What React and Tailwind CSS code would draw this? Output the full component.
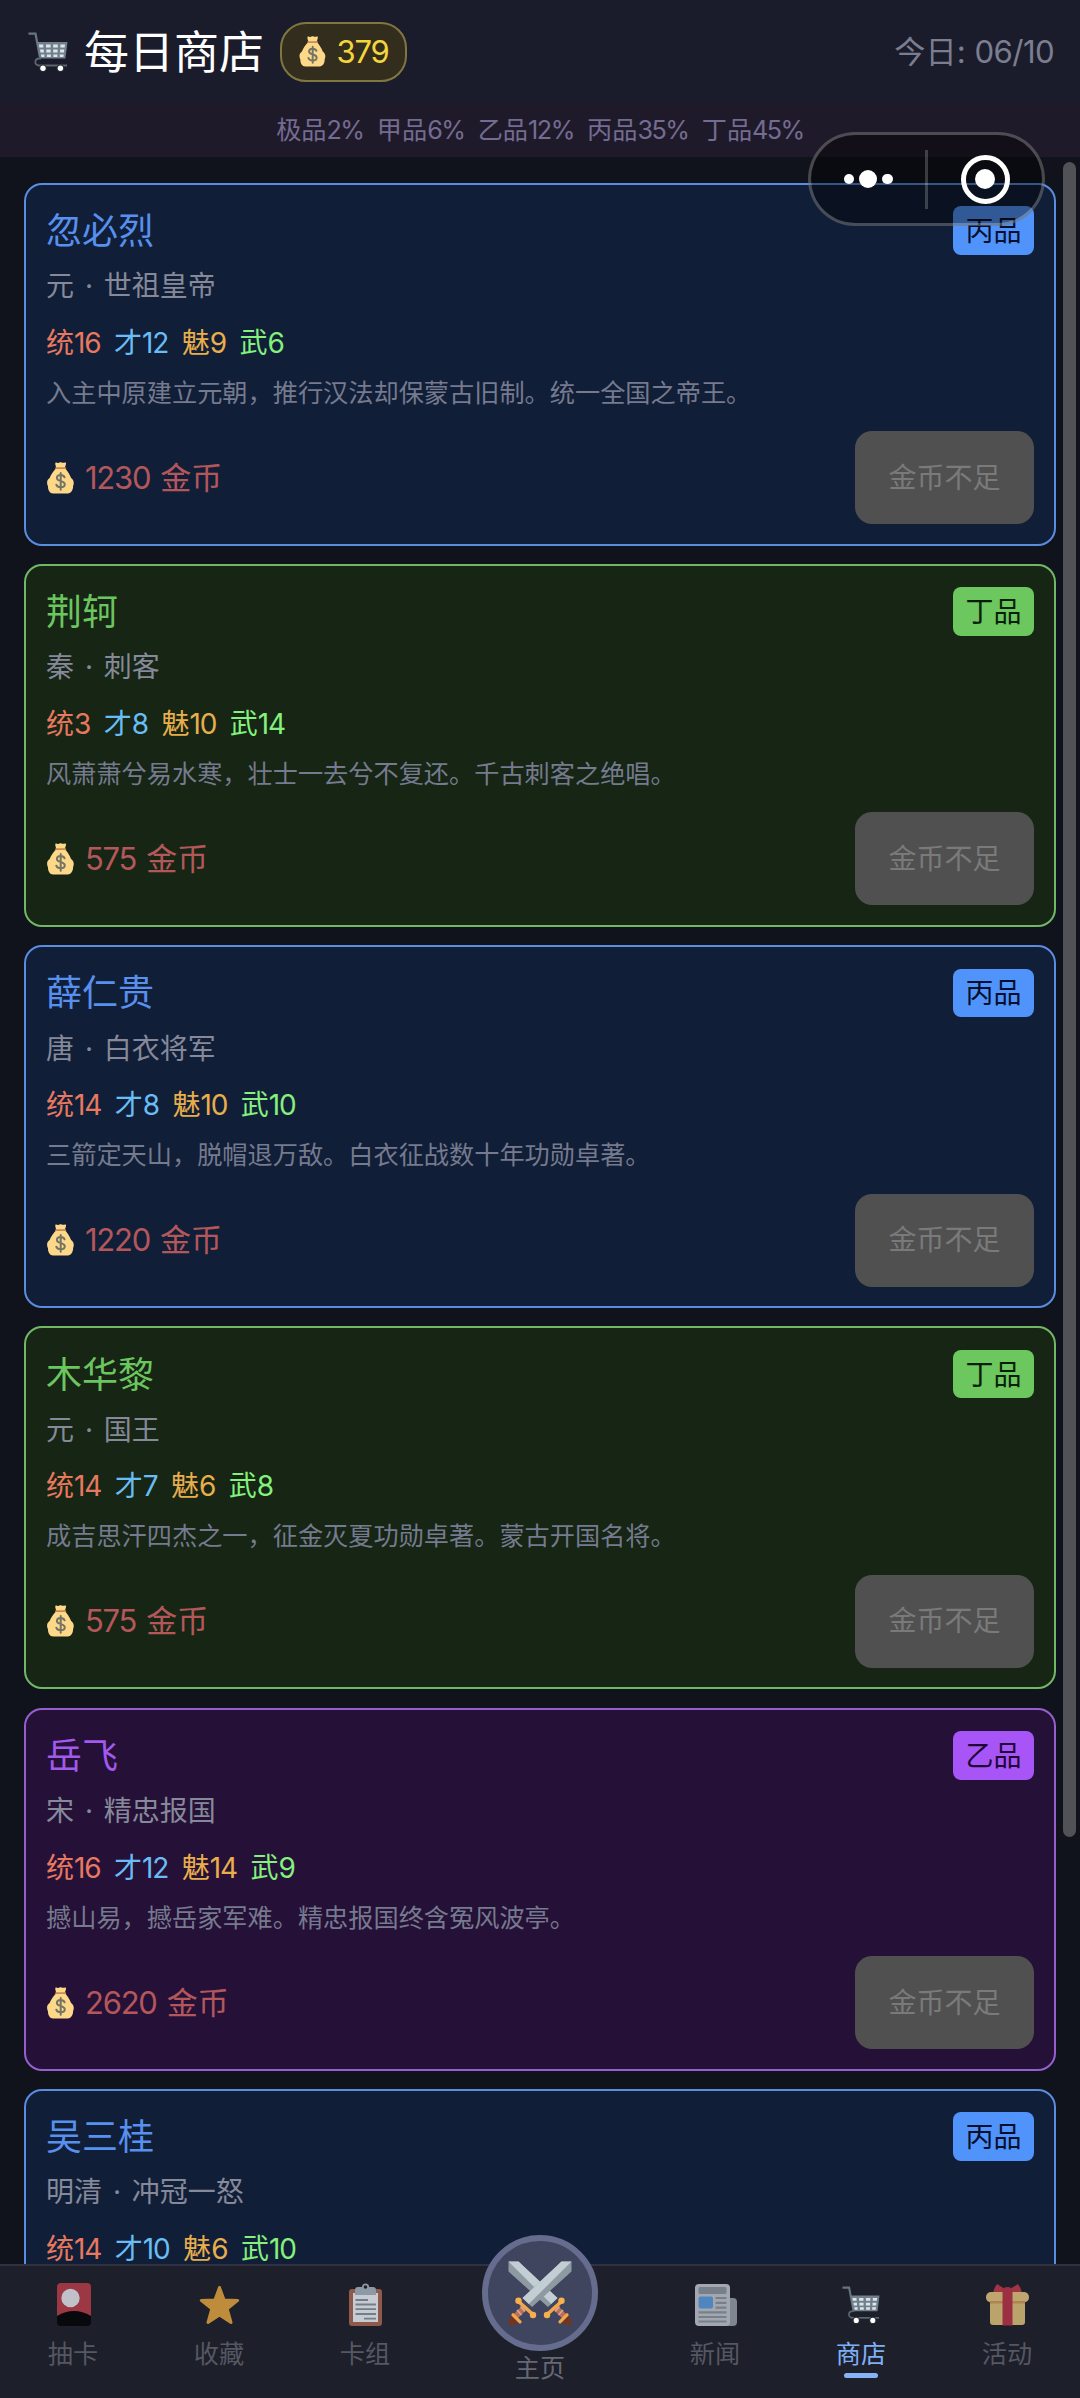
import React from 'react';

const THEMES = {
  blue: {
    card: 'bg-[#111e37] border-[#5a8ce0]',
    name: 'text-[#5790ee]',
    badge: 'bg-[#5094fb] text-[#050f2e]',
  },
  green: {
    card: 'bg-[#162514] border-[#70b866]',
    name: 'text-[#6cc660]',
    badge: 'bg-[#6dc75f] text-[#061f08]',
  },
  purple: {
    card: 'bg-[#251037] border-[#9560cd]',
    name: 'text-[#a259ee]',
    badge: 'bg-[#a855f7] text-[#1e0536]',
  },
};

const HEROES = [
  { name: '忽必烈', grade: '丙品', theme: 'blue', sub: '元 · 世祖皇帝', stats: [16, 12, 9, 6], desc: '入主中原建立元朝，推行汉法却保蒙古旧制。统一全国之帝王。', price: 1230 },
  { name: '荆轲', grade: '丁品', theme: 'green', sub: '秦 · 刺客', stats: [3, 8, 10, 14], desc: '风萧萧兮易水寒，壮士一去兮不复还。千古刺客之绝唱。', price: 575 },
  { name: '薛仁贵', grade: '丙品', theme: 'blue', sub: '唐 · 白衣将军', stats: [14, 8, 10, 10], desc: '三箭定天山，脱帽退万敌。白衣征战数十年功勋卓著。', price: 1220 },
  { name: '木华黎', grade: '丁品', theme: 'green', sub: '元 · 国王', stats: [14, 7, 6, 8], desc: '成吉思汗四杰之一，征金灭夏功勋卓著。蒙古开国名将。', price: 575 },
  { name: '岳飞', grade: '乙品', theme: 'purple', sub: '宋 · 精忠报国', stats: [16, 12, 14, 9], desc: '撼山易，撼岳家军难。精忠报国终含冤风波亭。', price: 2620 },
  { name: '吴三桂', grade: '丙品', theme: 'blue', sub: '明清 · 冲冠一怒', stats: [14, 10, 6, 10] },
];

const STATS = [
  ['统', 'text-[#e8795f]'],
  ['才', 'text-[#69bdf5]'],
  ['魅', 'text-[#e9ae4c]'],
  ['武', 'text-[#83f17c]'],
];

const RATES = [['极品', '2%'], ['甲品', '6%'], ['乙品', '12%'], ['丙品', '35%'], ['丁品', '45%']];

function Num({ children }) {
  return <span className="tracking-[-0.04em]">{children}</span>;
}

function Cart({ className }) {
  return (
    <svg viewBox="0 0 40 40" className={className} fill="none">
      <path d="M0.5 1.7H7.5L12 25.5" stroke="#66757f" strokeWidth="2.2" />
      <path d="M9 10H39.5L37.4 26.5H12Z" fill="#71808b" />
      <g fill="#dbe5ec">
        <path d="M11 12.6h4.3v2.9h-4zM18 12.6h4.6v2.9H18zM25.2 12.6h4.6v2.9h-4.6zM32.4 12.6H37l-.4 2.9h-4.2z" />
        <path d="M12 17.6h3.8v2.9h-3.3zM18.3 17.6h4.4v2.9h-4.4zM25.2 17.6h4.4v2.9h-4.4zM32.1 17.6h4.2l-.4 2.9h-3.8z" />
        <path d="M13 22.4h3.4v2.7h-3zM18.9 22.4h4v2.7h-4zM25.4 22.4h4v2.7h-4zM31.8 22.4h4l-.4 2.7h-3.6z" />
      </g>
      <path d="M13 26.5H11.5C6 26.5 6 33.5 11 33.5H39" stroke="#59656f" strokeWidth="1.8" />
      <circle cx="15" cy="36.2" r="3.8" fill="#292f33" />
      <circle cx="32.4" cy="36.2" r="3.8" fill="#292f33" />
      <circle cx="15" cy="36.2" r="2.7" fill="#fff" />
      <circle cx="32.4" cy="36.2" r="2.7" fill="#fff" />
    </svg>
  );
}

function Bag({ className }) {
  return (
    <svg viewBox="0 0 27 32" className={className} fill="none">
      <path d="M9.6 6.5C8.5 4 8 2 8.4.8c1-.6 2 .4 3 .2s1.4-1 2.3-.7c1 .3 1.5.7 2.4.5S18.3 0 19 .8c.2 1.6-.6 3.5-1.5 5.7z" fill="#fdd888" />
      <path d="M9.5 6h8.3c2.2 2.4 5 6.5 6.3 10 2.7 2 3.3 5 2 8 .1 3.5-1.6 7.4-5.3 7.4H6.2C2.6 31.4.9 27.7 1 24.4-.6 21-.2 18 2.6 16 4 12.2 7 8.4 9.5 6z" fill="#fdd888" />
      <path d="M9 6.2h9.3" stroke="#c98a55" strokeWidth="1.8" strokeLinecap="round" />
      <path d="M17.6 15.3c-.7-1.5-2-2.2-3.9-2.2-2.3 0-3.8 1.1-3.8 2.9 0 4 7.9 2.2 7.9 6.2 0 1.9-1.6 3.1-4.1 3.1-2.2 0-3.8-.9-4.4-2.6M13.700 11v16.700" stroke="#737466" strokeWidth="2" strokeLinecap="round" />
    </svg>
  );
}

function FlowerCard() {
  return (
    <svg viewBox="0 0 43 43" className="size-[43px]">
      <path d="M9 0h26a4 4 0 0 1 4 4v30H5V4a4 4 0 0 1 4-4z" fill="#9c3744" />
      <path d="M5 33q17-10 34 0v6a4 4 0 0 1-4 4H9a4 4 0 0 1-4-4z" fill="#08090c" />
      <circle cx="18.5" cy="15" r="9.2" fill="#c1c1c9" />
    </svg>
  );
}

function Star() {
  return (
    <svg viewBox="0 0 43 43" className="size-[43px]">
      <path d="M21.5 4.5l4.6 12.4 13.6.5-10.5 8.5L33 39.5l-11.5-7.5L10 39.5l3.800-13.600L3.300 17.400l13.600-.5z" fill="#bf8c3c" stroke="#bf8c3c" strokeWidth="3" strokeLinejoin="round" />
    </svg>
  );
}

function Clipboard() {
  return (
    <svg viewBox="0 0 43 43" className="size-[43px]" fill="none">
      <rect x="5" y="6" width="33" height="37" rx="3" fill="#8f5a4b" />
      <rect x="9" y="10" width="25" height="29" fill="#c7cbd2" />
      <path d="M11.5 17H24M11.5 21.5H32M11.5 26.2H32M11.5 31H32M20 35.6H32" stroke="#727e8a" strokeWidth="1.8" />
      <path d="M11 12V7a3 3 0 0 1 3-3h15a3 3 0 0 1 3 3v5z" fill="#8d99a5" />
      <circle cx="21.5" cy="4" r="2.7" fill="#1d1f2a" stroke="#8d99a5" strokeWidth="1.8" />
    </svg>
  );
}

function News() {
  return (
    <svg viewBox="0 0 43 43" className="size-[43px]" fill="none">
      <rect x="30" y="15" width="13" height="28" rx="4" fill="#7f868f" />
      <rect x="1" y="1" width="35" height="42" rx="4" fill="#a3a8b0" />
      <rect x="4.5" y="4" width="28" height="7" rx="1.5" fill="#77808a" />
      <rect x="4.5" y="13.5" width="14.5" height="12" rx="2" fill="#5086bf" />
      <path d="M21.5 15H32.5M21.5 19.8H32.5M21.5 24.6H32.5M4.5 29.3H32.5M4.5 34H32.5M4.5 38.5H32.5" stroke="#77808a" strokeWidth="2.2" />
    </svg>
  );
}

function Gift() {
  return (
    <svg viewBox="0 0 43 43" className="size-[43px]">
      <path d="M21.5 9C19 5 15 4 11.5 1 9 3 8 6 7 10h29c-1-4-2-7-4.5-9C28 4 24 5 21.5 9z" fill="#9f3444" />
      <path d="M4 14h35v25a3 3 0 0 1-3 3H7a3 3 0 0 1-3-3z" fill="#bba36c" />
      <rect x="0" y="9" width="43" height="10.5" rx="5" fill="#bfa66f" />
      <path d="M4 18h35v2.5H4z" fill="#b08450" />
      <path d="M16.5 9q0-5 5-5t5 5v33.5h-10z" fill="#9b3042" />
    </svg>
  );
}

function SwordHalf() {
  return (
    <g>
      <path d="M63.5.5H53.5L14.5 37l9.5 9L63.5 10.500z" fill="#8e9aa2" />
      <path d="M63.5.5H53.5L14.5 37l6.3 6z" fill="#c2cdd4" />
      <path d="M17 46L7 56" stroke="#b9715a" strokeWidth="6" />
      <path d="M12.5 45.5l4.5 5M9 49l4.5 5" stroke="#e0a792" strokeWidth="1.5" />
      <path d="M10.5 40.5L25 53.5" stroke="#f2a84a" strokeWidth="3.6" />
      <circle cx="10.5" cy="39.8" r="3.2" fill="#f7b04c" />
      <circle cx="25" cy="54" r="3.2" fill="#f7b04c" />
      <path d="M.8 57.5l4.5-2 4.5 4.8-2.5 3.5-4 1-3-3z" fill="#74351f" />
      <path d="M5 53.8l7 7" stroke="#f2a84a" strokeWidth="3.2" strokeLinecap="round" />
    </g>
  );
}

function Swords() {
  return (
    <svg viewBox="0 0 64 65" className="h-[65px] w-[64px]">
      <g transform="matrix(-1 0 0 1 64 0)"><SwordHalf /></g>
      <SwordHalf />
    </svg>
  );
}

function HeroCard({ hero }) {
  const t = THEMES[hero.theme];
  return (
    <article className={`flex h-[363px] shrink-0 flex-col rounded-[18px] border-2 px-[20px] pt-[21.5px] ${t.card}`}>
      <div className="flex h-[48.5px] items-center justify-between">
        <h2 className={`mt-px text-[36px] leading-[48px] ${t.name}`}>{hero.name}</h2>
        <span className={`flex h-[48.5px] w-[81px] items-center justify-center rounded-lg pt-px text-[28px] leading-none ${t.badge}`}>
          {hero.grade}
        </span>
      </div>
      <p className="mt-[10.5px] h-[42px] text-[28px] leading-[42px] text-[#858999] [word-spacing:3px]">{hero.sub}</p>
      <div className="mt-[18.5px] flex h-[34px] gap-[13.5px] text-[28px] leading-[34px]">
        {STATS.map(([label, color], i) => (
          <span key={label} className={color}>{label}<Num>{hero.stats[i]}</Num></span>
        ))}
      </div>
      {hero.desc && (
        <p className="mt-[13px] h-[40px] text-[25.2px] leading-[40px] text-[#757a8e]">{hero.desc}</p>
      )}
      {hero.price && (
        <div className="mt-[18.5px] flex h-[93px] items-center justify-between">
          <div className="flex items-center text-[31px] leading-[44px] text-[#b3575b]">
            <Bag className="ml-[1px] h-[32px] w-[27px]" />
            <span className="ml-[11px]"><Num>{hero.price}</Num></span>
            <span className="ml-[10px]">金币</span>
          </div>
          <button disabled className="h-[93px] w-[179px] rounded-[17px] bg-[#505050] text-[28px] leading-none text-[#7a7a7a]">
            金币不足
          </button>
        </div>
      )}
    </article>
  );
}

function NavItem({ icon, label, active }) {
  return (
    <div className="relative flex flex-col items-center pt-[17px]">
      {icon}
      <span className={`mt-[13px] text-[25.2px] leading-[30px] ${active ? 'text-[#7fb0f5]' : 'text-[#555762]'}`}>{label}</span>
      {active && <span className="absolute top-[107px] h-[5px] w-[34px] rounded-full bg-[#85b3f5]" />}
    </div>
  );
}

export default function App() {
  return (
    <div className="relative flex h-[2398px] w-[1080px] flex-col overflow-hidden bg-[#10131b] font-['Inter','Noto_Sans_CJK_SC',sans-serif] font-normal">
      <header className="flex h-[103px] shrink-0 items-center bg-[#1a1c2b] pr-[26px] pl-[28px]">
        <Cart className="size-[40px]" />
        <h1 className="mt-[2px] ml-[16px] text-[45px] leading-[60px] text-white">每日商店</h1>
        <div className="ml-[16px] flex h-[60px] w-[127px] items-center justify-center rounded-[26px] border-2 border-[#7f7740] bg-[#332d1d] text-[31px] leading-none text-[#f3d53c]">
          <Bag className="mr-[11px] h-[31px] w-[27px]" />
          <Num>379</Num>
        </div>
        <span className="mt-[2px] ml-auto text-[31.2px] leading-none text-[#7b7e90]">今日: <span className="tracking-[-0.02em]">06/10</span></span>
      </header>

      <div className="flex h-[54px] shrink-0 items-center justify-center gap-[13.2px] bg-[#1f1a2a] pt-[2px] text-[25.2px] leading-none text-[#746c92]">
        {RATES.map(([label, pct]) => (
          <span key={label}>{label}<span className="tracking-[-0.06em]">{pct}</span></span>
        ))}
      </div>

      <main className="flex min-h-0 flex-1 flex-col gap-[18.3px] overflow-hidden px-[24px] pt-[25.5px]">
        {HEROES.map((hero) => <HeroCard key={hero.name} hero={hero} />)}
      </main>

      <nav className="relative grid h-[134px] shrink-0 grid-cols-[146px_146px_146px_204px_146px_146px_146px] border-t-2 border-[#303240] bg-[#1d1f2a]">
        <NavItem icon={<FlowerCard />} label="抽卡" />
        <NavItem icon={<Star />} label="收藏" />
        <NavItem icon={<Clipboard />} label="卡组" />
        <div className="flex flex-col items-center">
          <div className="mt-[-31px] flex size-[116px] shrink-0 items-center justify-center rounded-full border-[6px] border-[#656c8d] bg-[#40455f]">
            <Swords />
          </div>
          <span className="mt-[2px] text-[25.2px] leading-[30px] text-[#666874]">主页</span>
        </div>
        <NavItem icon={<News />} label="新闻" />
        <NavItem icon={<span className="flex size-[43px] items-center justify-center"><Cart className="size-[38px]" /></span>} label="商店" active />
        <NavItem icon={<Gift />} label="活动" />
      </nav>

      <div className="absolute top-[162px] right-[4px] h-[1675px] w-[13px] rounded-full bg-[#505256]" />

      <div className="absolute top-[132px] left-[808px] flex h-[94px] w-[237px] items-center rounded-full border-[3px] border-white/25 bg-black/40">
        <div className="flex flex-1 items-center justify-center gap-[5px]">
          <span className="size-[10.5px] rounded-full bg-white" />
          <span className="size-[18px] rounded-full bg-white" />
          <span className="size-[10.5px] rounded-full bg-white" />
        </div>
        <span className="h-[59px] w-[3px] bg-white/20" />
        <div className="flex flex-1 items-center justify-center">
          <span className="flex size-[49px] items-center justify-center rounded-full border-[5px] border-white">
            <span className="size-[20px] rounded-full bg-white" />
          </span>
        </div>
      </div>
    </div>
  );
}
